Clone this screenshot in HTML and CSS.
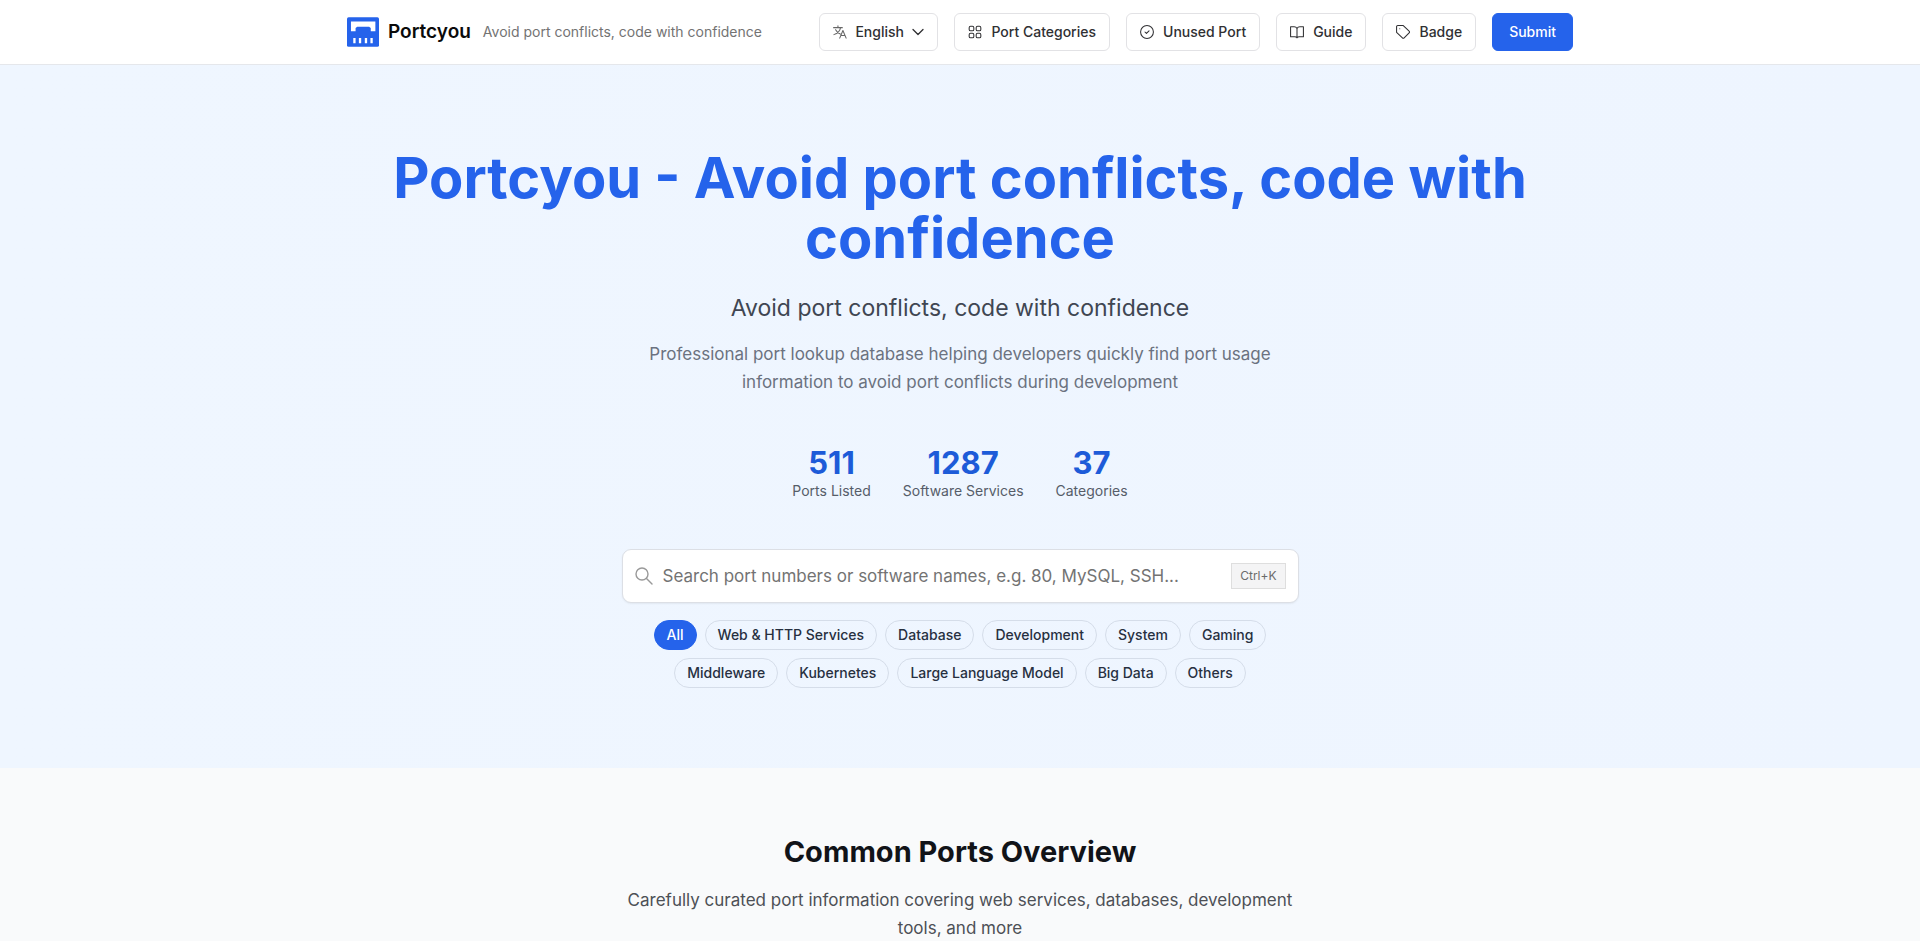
FILE: index.html
```html
<!DOCTYPE html>
<html lang="en">
<head>
    <meta charset="UTF-8">
    <meta name="viewport" content="width=device-width, initial-scale=1.0">
    <title>Portcyou - Avoid port conflicts, code with confidence</title>
    <link rel="stylesheet" href="styles.css">
</head>
<body>
    <!-- Header -->
    <header class="site-header">
        <div class="header-inner">
            <a href="/" class="brand">
                <svg class="logo" viewBox="0 0 97 90" aria-hidden="true">
                    <rect width="97" height="90" rx="5" fill="#2563eb"/>
                    <path fill="#fff" d="M12 13H86V43H72V33L67 29H31L26 33V43H12Z"/>
                    <path fill="#fff" d="M19 63h7v16h-7zM36 63h7v16h-7zM54 63h7v16h-7zM71 63h7v16h-7z"/>
                </svg>
                <span class="brand-name">Portcyou</span>
            </a>
            <span class="tagline">Avoid port conflicts, code with confidence</span>

            <nav class="nav">
                <label class="btn lang">
                    <svg class="icon muted" viewBox="0 0 24 24" aria-hidden="true">
                        <path d="M1 4.500h15M8.500 1.500v3M13 4.500c-1 5.500-5.500 10-11.500 12M4.500 8c2 4 4.500 6 8 7.500M11.500 22.500l5.500-13 5.500 13M13.500 18h7"/>
                    </svg>
                    <select aria-label="Language">
                        <option>English</option>
                    </select>
                    <svg class="chevron" viewBox="0 0 12 12" aria-hidden="true">
                        <path d="M1 3.500l5 5 5-5"/>
                    </svg>
                </label>
                <a href="/categories" class="btn">
                    <svg class="icon" viewBox="0 0 24 24" aria-hidden="true">
                        <rect x="2" y="2" width="8" height="8" rx="2.500"/>
                        <rect x="14" y="2" width="8" height="8" rx="2.500"/>
                        <rect x="2" y="14" width="8" height="8" rx="2.500"/>
                        <rect x="14" y="14" width="8" height="8" rx="2.500"/>
                    </svg>
                    Port Categories
                </a>
                <a href="/unused" class="btn">
                    <svg class="icon" viewBox="0 0 24 24" aria-hidden="true">
                        <circle cx="12" cy="12" r="11"/>
                        <path d="M8.500 12l2.500 2.500 4.500-4.500"/>
                    </svg>
                    Unused Port
                </a>
                <a href="/guide" class="btn">
                    <svg class="icon" viewBox="0 0 24 24" aria-hidden="true">
                        <path d="M12 6c-1-2-3-3-5-3H1v17h7c2 0 3.300.600 4 2 .700-1.400 2-2 4-2h7V3h-6c-2 0-4 1-5 3zM12 6v16"/>
                    </svg>
                    Guide
                </a>
                <a href="/badge" class="btn">
                    <svg class="icon" viewBox="0 0 24 24" aria-hidden="true">
                        <path d="M1 3a2 2 0 0 1 2-2h9.500l10 9.500a2 2 0 0 1 0 3L14 22a2 2 0 0 1-3 0L1 12.500z"/>
                        <path d="M6.500 6.500h.010"/>
                    </svg>
                    Badge
                </a>
                <a href="/submit" class="btn btn-primary">Submit</a>
            </nav>
        </div>
    </header>

    <!-- Hero -->
    <section class="hero">
        <h1>Portcyou - Avoid port conflicts, code with confidence</h1>
        <p class="subtitle">Avoid port conflicts, code with confidence</p>
        <p class="lead">Professional port lookup database helping developers quickly find port usage information to avoid port conflicts during development</p>

        <div class="stats">
            <div class="stat">
                <strong>511</strong>
                <span>Ports Listed</span>
            </div>
            <div class="stat">
                <strong>1287</strong>
                <span>Software Services</span>
            </div>
            <div class="stat">
                <strong>37</strong>
                <span>Categories</span>
            </div>
        </div>

        <label class="search">
            <svg class="search-icon" viewBox="0 0 18 18" aria-hidden="true">
                <circle cx="7" cy="7" r="6"/>
                <path d="M11.500 11.500l5.500 5.500"/>
            </svg>
            <input type="search" aria-label="Search ports" placeholder="Search port numbers or software names, e.g. 80, MySQL, SSH...">
            <kbd>Ctrl+K</kbd>
        </label>

        <div class="filters">
            <button type="button" class="pill active">All</button>
            <button type="button" class="pill">Web &amp; HTTP Services</button>
            <button type="button" class="pill">Database</button>
            <button type="button" class="pill">Development</button>
            <button type="button" class="pill">System</button>
            <button type="button" class="pill">Gaming</button>
            <button type="button" class="pill">Middleware</button>
            <button type="button" class="pill">Kubernetes</button>
            <button type="button" class="pill">Large Language Model</button>
            <button type="button" class="pill">Big Data</button>
            <button type="button" class="pill">Others</button>
        </div>
    </section>

    <!-- Overview -->
    <section class="overview">
        <h2>Common Ports Overview</h2>
        <p>Carefully curated port information covering web services, databases, development tools, and more</p>
    </section>
</body>
</html>
```
FILE: styles.css
```css
/* Global Styles */
* {
    box-sizing: border-box;
}

body {
    margin: 0;
    background-color: #f9fafb;
    color: #111318;
    font-family: Inter, 'Liberation Sans', sans-serif;
    font-size: 14px;
    line-height: 20px;
    overflow-x: hidden;
}

h1, h2, p {
    margin: 0;
}

a {
    color: inherit;
    text-decoration: none;
}

svg {
    flex-shrink: 0;
    fill: none;
    stroke-linecap: round;
    stroke-linejoin: round;
}

/* Header */
.site-header {
    background-color: #fff;
    border-bottom: 1px solid #e5e7eb;
}

.header-inner {
    display: flex;
    align-items: center;
    max-width: 1258px;
    min-height: 64px;
    margin: 0 auto;
    padding: 0 16px;
}

.brand {
    display: flex;
    align-items: center;
    gap: 9px;
}

.logo {
    width: 32px;
    height: 30px;
}

.brand-name {
    font-size: 19px;
    font-weight: 600;
    color: #0a0a0a;
}

.tagline {
    margin-left: 12px;
    color: #737373;
}

.nav {
    display: flex;
    gap: 16px;
    margin-left: auto;
}

.btn {
    display: flex;
    align-items: center;
    gap: 9px;
    height: 38px;
    padding: 0 13px;
    border: 1px solid #e2e2e5;
    border-radius: 6px;
    background-color: #fff;
    color: #303033;
    font-weight: 500;
    white-space: nowrap;
}

.btn:hover {
    background-color: #f5f5f5;
}

.btn-primary {
    padding: 0 16px;
    border-color: #2563eb;
    background-color: #2563eb;
    color: #fff;
}

.btn-primary:hover {
    background-color: #1d4ed8;
}

.icon {
    width: 14px;
    height: 14px;
    stroke: currentColor;
    stroke-width: 1.8;
}

.muted {
    color: #666;
}

.chevron {
    width: 12px;
    height: 12px;
    stroke: currentColor;
    stroke-width: 1.3;
}

.lang {
    gap: 8px;
}

.lang select {
    appearance: none;
    padding: 0;
    border: 0;
    outline: 0;
    background: none;
    color: inherit;
    font: inherit;
    cursor: pointer;
}

/* Hero */
.hero {
    display: flex;
    flex-direction: column;
    align-items: center;
    padding: 83px 16px 80px;
    background: linear-gradient(to right, #eff6ff, #eef5ff);
    text-align: center;
}

.hero h1 {
    max-width: 1226px;
    color: #2563eb;
    font-size: 56px;
    font-weight: 700;
    line-height: 60px;
}

.subtitle {
    margin-top: 24px;
    color: #404652;
    font-size: 23px;
    line-height: 32px;
}

.lead {
    max-width: 680px;
    margin-top: 16px;
    color: #6b7280;
    font-size: 17px;
    line-height: 28px;
}

.stats {
    display: flex;
    gap: 32px;
    margin-top: 49px;
}

.stat strong {
    display: block;
    color: #1d5bd8;
    font-size: 31px;
    font-weight: 700;
    line-height: 36px;
}

.stat span {
    color: #565d69;
}

/* Search */
.search {
    display: flex;
    align-items: center;
    gap: 10px;
    width: 100%;
    max-width: 677px;
    height: 54px;
    margin-top: 48px;
    padding: 0 12px;
    border: 1px solid #dcdfe5;
    border-radius: 9px;
    background-color: #fff;
    box-shadow: 0 1px 2px rgba(0, 0, 0, 0.06);
}

.search-icon {
    width: 18px;
    height: 18px;
    stroke: #999;
    stroke-width: 1.4;
}

.search input {
    flex: 1;
    min-width: 0;
    padding: 0;
    border: 0;
    outline: 0;
    background: none;
    color: #111318;
    font: inherit;
    font-size: 17px;
}

.search input::placeholder {
    color: #737373;
    opacity: 1;
}

.search kbd {
    padding: 2px 8px;
    border: 1px solid #dedede;
    background-color: #f4f4f5;
    color: #6b6b6b;
    font: inherit;
    font-size: 12px;
    line-height: 20px;
}

/* Category filters */
.filters {
    display: flex;
    flex-wrap: wrap;
    justify-content: center;
    gap: 8px;
    width: 100%;
    max-width: 677px;
    margin-top: 17px;
}

.pill {
    height: 30px;
    padding: 0 12px;
    border: 1px solid #d5dde9;
    border-radius: 15px;
    background: none;
    color: #27303f;
    font: inherit;
    font-weight: 500;
    cursor: pointer;
}

.pill.active {
    border-color: #2563eb;
    background-color: #2563eb;
    color: #fff;
}

/* Overview */
.overview {
    padding: 64px 16px;
    text-align: center;
}

.overview h2 {
    font-size: 29px;
    font-weight: 700;
    line-height: 40px;
}

.overview p {
    max-width: 680px;
    margin: 14px auto 0;
    color: #4d5056;
    font-size: 17px;
    line-height: 28px;
}
```
